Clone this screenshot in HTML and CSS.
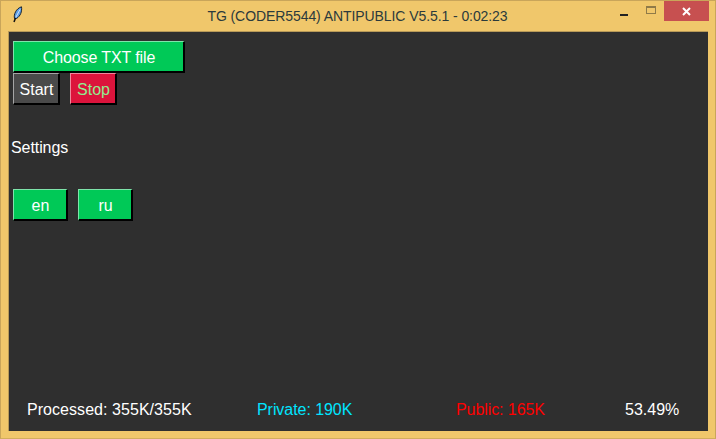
FILE: index.html
```html
<!DOCTYPE html>
<html lang="en">
<head>
<meta charset="utf-8">
<title>TG (CODER5544) ANTIPUBLIC V5.5.1</title>
<link rel="stylesheet" href="styles.css">
</head>
<body>
<div class="window">
  <header class="titlebar">
    <svg class="feather" viewBox="0 0 16 18" width="16" height="18" aria-hidden="true">
      <path d="M4.5 12.5 C3.5 8.5 6 2.5 11.5 0.8 C12.2 5.5 10.5 10 6.5 12.5 Z" fill="#5f9fe6" stroke="#16202c" stroke-width="1"/>
      <path d="M10 3.5 L6 11" stroke="#cfe3f8" stroke-width="1" fill="none"/>
      <path d="M5.5 12 L4 16" stroke="#111" stroke-width="1.5" fill="none"/>
    </svg>
    <div class="title">TG (CODER5544) ANTIPUBLIC V5.5.1 - 0:02:23</div>
    <div class="controls">
      <div class="ctl ctl-min"><span class="min-bar"></span></div>
      <div class="ctl ctl-max"><span class="max-box"></span></div>
      <div class="ctl ctl-close">
        <svg viewBox="0 0 9 9" width="9" height="9" aria-hidden="true"><path d="M1 1 L8 8 M8 1 L1 8" stroke="#fff" stroke-width="2" fill="none"/></svg>
      </div>
    </div>
  </header>
  <main class="content">
    <div class="top">
      <button class="btn green wide">Choose TXT file</button>
      <div class="row">
        <button class="btn gray small">Start</button>
        <button class="btn red small">Stop</button>
      </div>
      <div class="settings">Settings</div>
      <div class="row lang">
        <button class="btn green lang-btn">en</button>
        <button class="btn green lang-btn">ru</button>
      </div>
    </div>
    <footer class="status">
      <span class="stat processed">Processed: 355K/355K</span>
      <span class="stat private">Private: 190K</span>
      <span class="stat public">Public: 165K</span>
      <span class="stat percent">53.49%</span>
    </footer>
  </main>
</div>
</body>
</html>
```
FILE: styles.css
```css
* { box-sizing: border-box; }
html, body { margin: 0; padding: 0; }
body { width: 716px; height: 439px; overflow: hidden; font-family: "Liberation Sans", Arial, sans-serif; }
.window {
  width: 716px; height: 439px; background: #f0c76b;
  border: 1px solid #c9a55a; border-bottom-color: #d2ad5e;
  display: flex; flex-direction: column;
}
.titlebar { height: 30px; flex: none; display: flex; position: relative; }
.feather { position: absolute; left: 9px; top: 5px; }
.title { width: 100%; text-align: center; font-size: 14px; letter-spacing: -0.08px; line-height: 30px; color: #2b3a3c; padding-right: 1px; }
.controls { position: absolute; right: 6px; top: 0; display: flex; height: 20px; }
.ctl { display: flex; align-items: center; justify-content: center; height: 20px; }
.ctl-min { width: 26px; }
.min-bar { width: 8px; height: 2px; background: #222; margin-top: 7px; }
.ctl-max { width: 27px; }
.max-box { width: 10px; height: 8px; border: 1px solid #8f7a48; border-top-width: 2px; margin-top: -2px; }
.ctl-close { width: 45px; background: #c75050; }
.content {
  margin: 0 7px 7px; flex: 1; background: #2f2f2f;
  border-top: 1px solid #b89a58; border-left: 1px solid #b89a58;
  display: flex; flex-direction: column; justify-content: space-between;
}
.top { padding: 9px 0 0 4px; display: flex; flex-direction: column; align-items: flex-start; }
.btn {
  font: 16px/1 "Liberation Sans", Arial, sans-serif; height: 32px; padding: 2px 0 0 1px; margin: 0;
  border: 1px solid; border-width: 1px 2px 2px 1px; border-radius: 0; display: block;
}
.green { background: #00c957; color: #fff; border-color: #7fe4ab #000 #000 #7fe4ab; }
.gray { background: #4a4a4a; color: #fff; border-color: #a5a5a5 #000 #000 #a5a5a5; }
.red { background: #dc143c; color: #90ee90; border-color: #ee8a9e #000 #000 #ee8a9e; }
.wide { width: 172px; letter-spacing: -0.12px; }
.small { width: 47px; }
.lang-btn { width: 55px; }
.row { display: flex; gap: 10px; }
.settings { font-size: 16px; letter-spacing: -0.08px; line-height: 18px; color: #fff; margin: 34px 0 0 -2px; }
.lang { margin-top: 32px; }
.status { height: 18px; margin-bottom: 12px; font-size: 16px; line-height: 18px; display: flex; padding-left: 18px; }
.stat { display: block; white-space: nowrap; }
.processed { width: 230px; color: #fff; letter-spacing: 0.05px; }
.private { width: 200px; color: #00e5ff; letter-spacing: -0.06px; }
.public { width: 168px; color: #f00; letter-spacing: -0.08px; margin-left: -1px; }
.percent { color: #fff; margin-left: 1px; }
```
